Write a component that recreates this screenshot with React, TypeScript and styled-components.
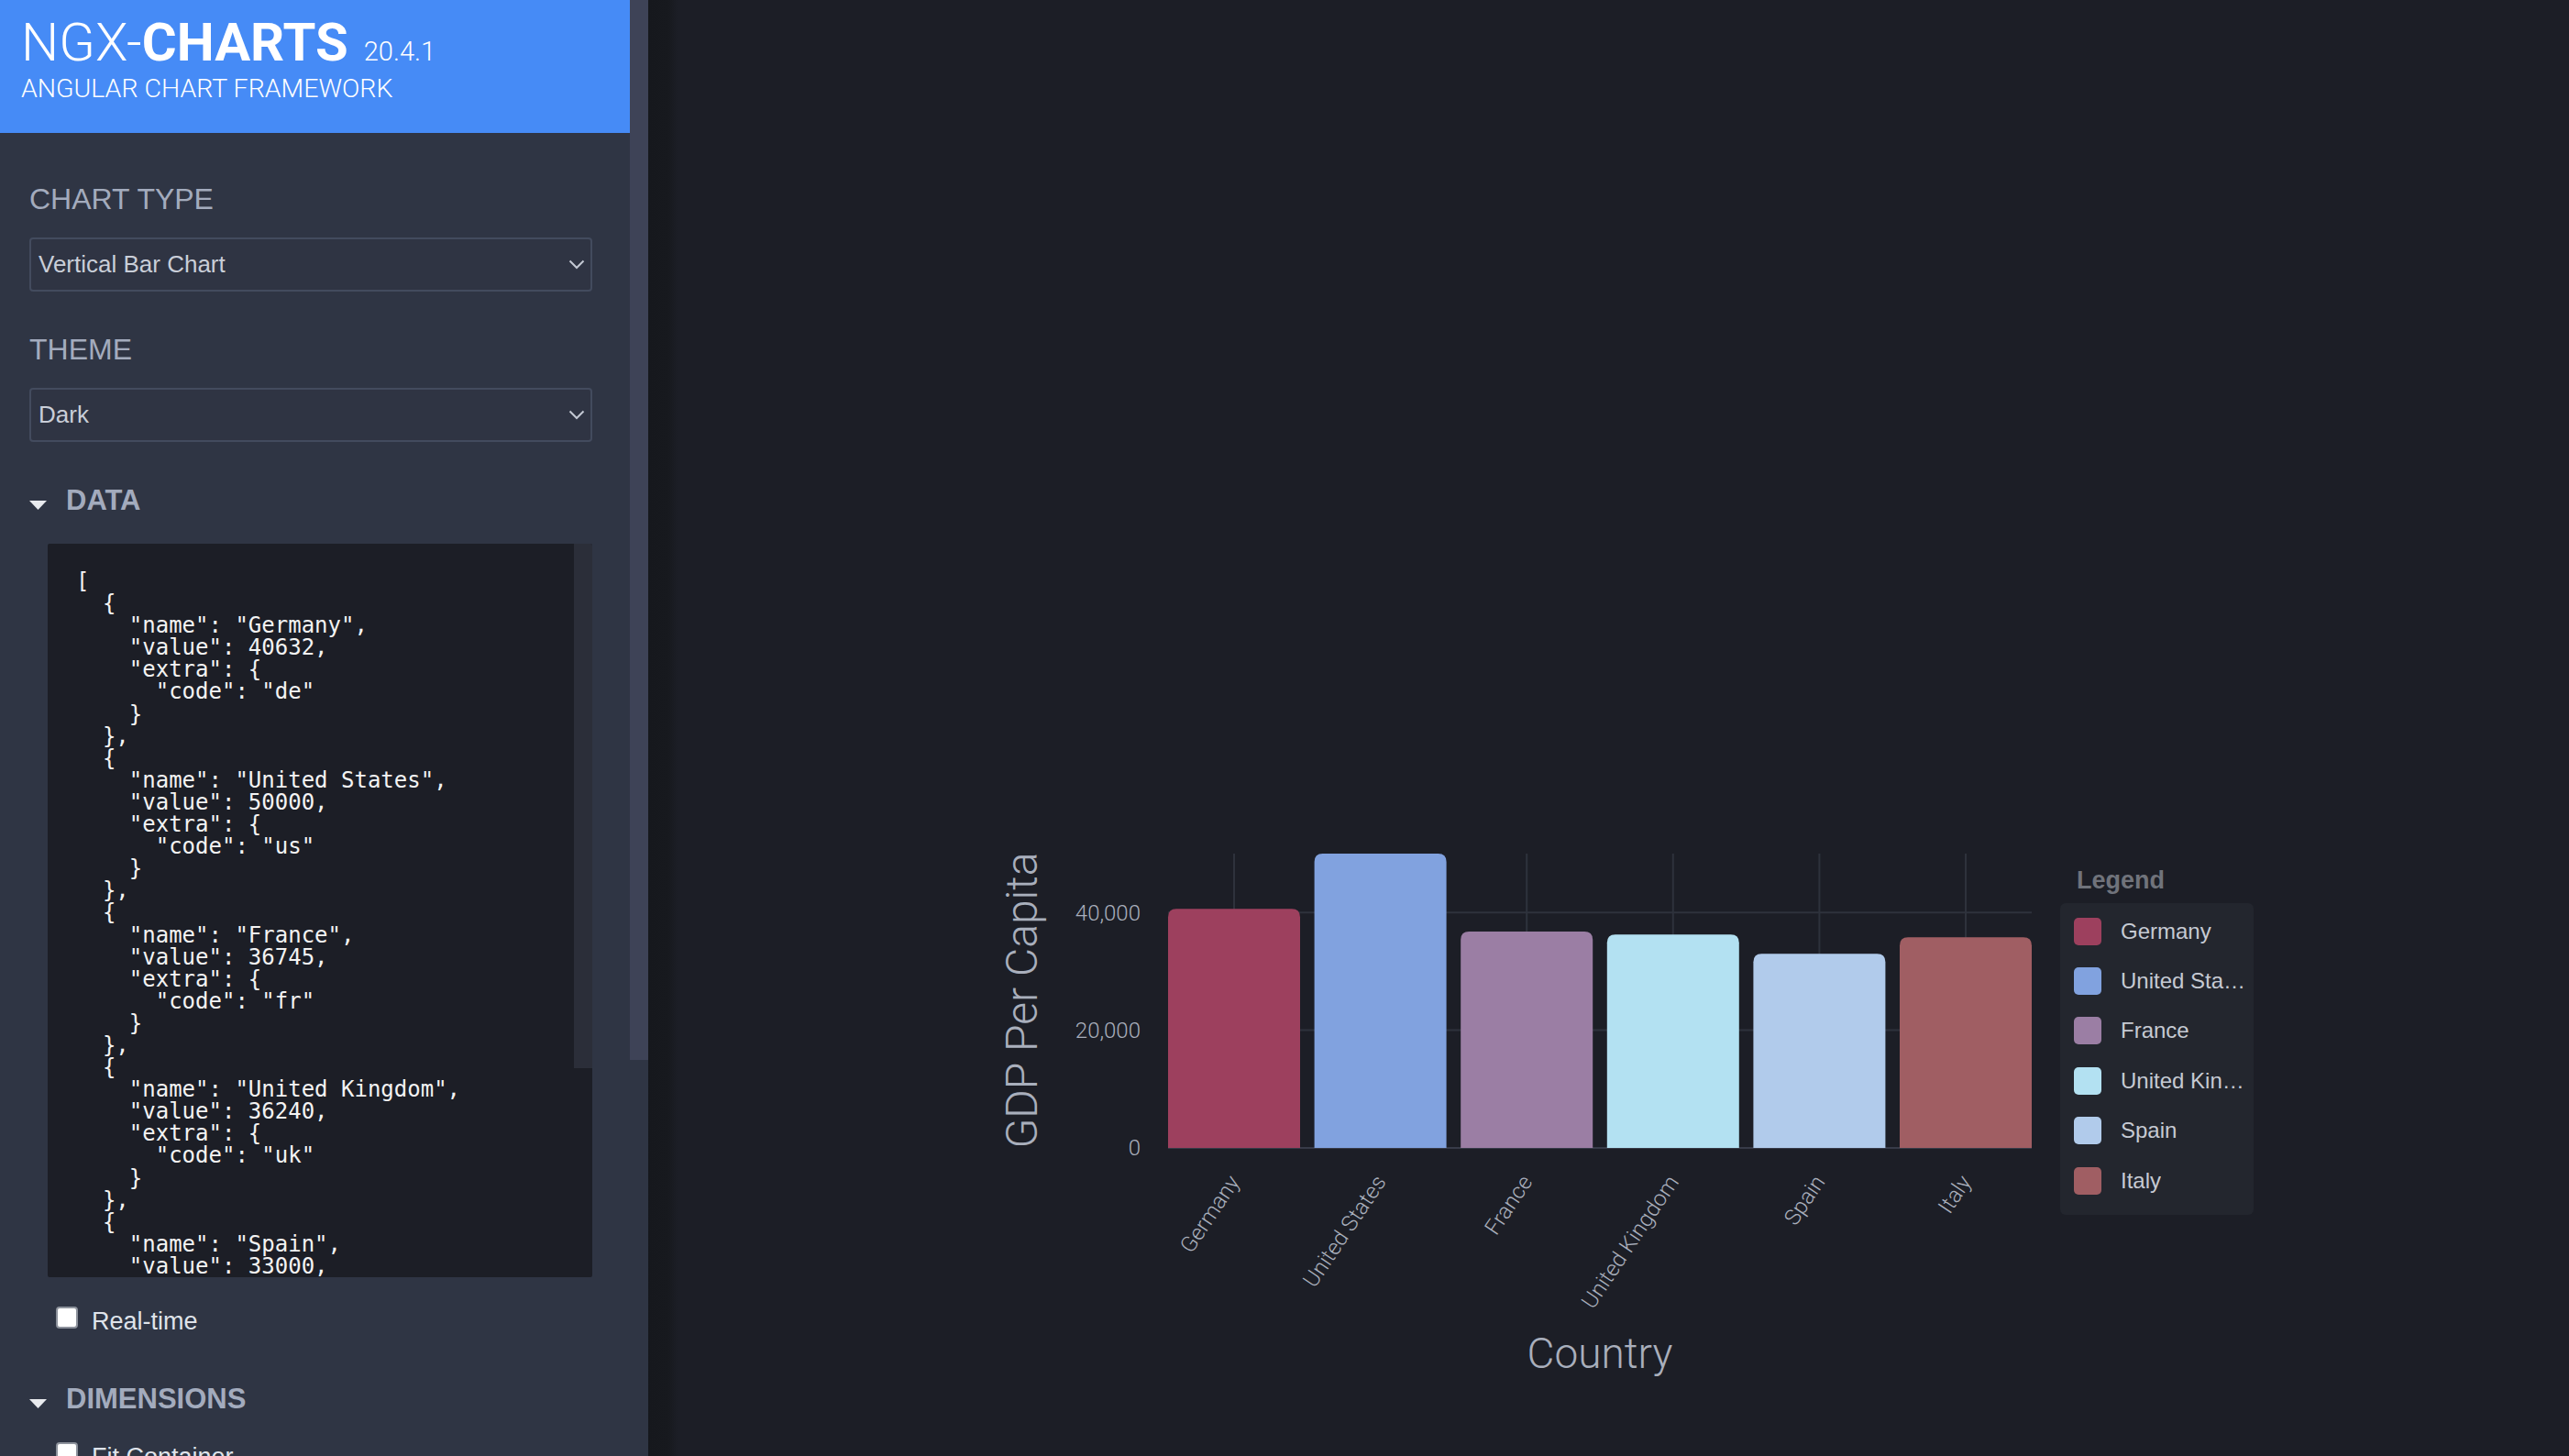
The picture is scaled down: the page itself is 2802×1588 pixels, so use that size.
import React from 'react';
import styled, { createGlobalStyle } from 'styled-components';

const GlobalStyle = createGlobalStyle`
  html, body { margin: 0; padding: 0; height: 100%; overflow: hidden; background: #1c1e26; }
  #root { height: 100%; }
  * { box-sizing: border-box; }
`;

const Page = styled.div`
  display: flex;
  width: 2802px;
  height: 1588px;
  overflow: hidden;
`;

/* ---------- Sidebar ---------- */
const Sidebar = styled.aside`
  display: flex;
  flex-shrink: 0;
  width: 707px;
  height: 100%;
  background: #2f3544;
`;

const SidebarContent = styled.div`
  width: 687px;
  height: 100%;
  overflow: hidden;
  display: flex;
  flex-direction: column;
`;

const PageScrollbar = styled.div`
  width: 20px;
  height: 100%;
  background: #2f3544;
  display: flex;
  flex-direction: column;
`;

const ScrollThumb = styled.div<{ $height: number; $color: string }>`
  flex-shrink: 0;
  height: ${(p) => p.$height}px;
  background: ${(p) => p.$color};
`;

const Header = styled.header`
  flex-shrink: 0;
  height: 145px;
  padding: 18px 0 0 23px;
  background: #468bf6;
  color: #ffffff;
  font-family: Roboto, "Liberation Sans", sans-serif;
`;

const Title = styled.h1`
  margin: 0;
  font-size: 58px;
  line-height: 56px;
  font-weight: 300;
  white-space: nowrap;
`;

const TitleStrong = styled.strong`
  font-weight: 700;
`;

const Version = styled.span`
  margin-left: 17px;
  font-size: 29px;
  font-weight: 300;
`;

const Tagline = styled.div`
  margin-top: -1px;
  font-size: 28.5px;
  line-height: 28px;
  font-weight: 300;
  white-space: nowrap;
`;

const Controls = styled.div`
  display: flex;
  flex-direction: column;
  padding: 56px 41px 0 32px;
  font-family: "Liberation Sans", Arial, sans-serif;
`;

const FieldLabel = styled.div<{ $gap: number }>`
  margin-top: ${(p) => p.$gap}px;
  font-size: 32px;
  line-height: 32px;
  color: #a3abbd;
  text-transform: uppercase;
  white-space: nowrap;
`;

const Select = styled.div`
  margin-top: 26px;
  height: 59px;
  display: flex;
  align-items: center;
  justify-content: space-between;
  padding: 0 6px 0 8px;
  border: 2px solid #434b5e;
  border-radius: 4px;
  background: #2f3443;
  color: #c9ced8;
  font-size: 26px;
`;

const SectionHeader = styled.div<{ $gap: number }>`
  margin-top: ${(p) => p.$gap}px;
  display: flex;
  align-items: baseline;
  gap: 21px;
  font-size: 31px;
  line-height: 31px;
  font-weight: 700;
  color: #a3abbd;
  text-transform: uppercase;
`;

const CodeBox = styled.div`
  margin: 32px 0 0 20px;
  height: 800px;
  flex-shrink: 0;
  display: flex;
  background: #1c1e26;
  border-radius: 2px;
  overflow: hidden;
`;

const CodeText = styled.pre`
  flex: 1;
  margin: 0;
  padding: 29px 0 0 31px;
  font-family: "DejaVu Sans Mono", "Liberation Mono", monospace;
  font-size: 24px;
  line-height: 24.1px;
  color: #f3f3f3;
  overflow: hidden;
  white-space: pre;
`;

const CodeScrollbar = styled.div`
  width: 20px;
  flex-shrink: 0;
  display: flex;
  flex-direction: column;
`;

const CheckRow = styled.label<{ $gap: number }>`
  margin-top: ${(p) => p.$gap}px;
  margin-left: 29px;
  display: flex;
  align-items: flex-start;
  gap: 15px;
  color: #dfe3ea;
  font-size: 27px;
  line-height: 27px;
  white-space: nowrap;
`;

const CheckBox = styled.span`
  width: 24px;
  height: 24px;
  flex-shrink: 0;
  background: #ffffff;
  border: 2px solid #8d929c;
  border-radius: 4px;
`;

const CheckText = styled.span`
  margin-top: 3px;
`;

/* ---------- Main ---------- */
const Main = styled.main`
  flex: 1;
  height: 100%;
  background: linear-gradient(to right, #16181d 0, #17191e 22px, #1c1e26 32px);
  padding: 900px 0 0 373px;
  display: flex;
  align-items: flex-start;
`;

const ChartSvg = styled.svg`
  flex-shrink: 0;
  display: block;
`;

const GridLine = styled.line`
  stroke: #2e323c;
  stroke-width: 2;
`;

const AxisLine = styled.line`
  stroke: #373b48;
  stroke-width: 2;
`;

const TickText = styled.text`
  font-family: Roboto, "Liberation Sans", sans-serif;
  font-weight: 300;
  font-size: 24px;
  fill: #a9afbc;
`;

const AxisTitle = styled.text<{ $size: number }>`
  font-family: Roboto, "Liberation Sans", sans-serif;
  font-weight: 300;
  font-size: ${(p) => p.$size}px;
  fill: #a9afbc;
`;

const Legend = styled.div`
  margin: 47px 0 0 7px;
  display: flex;
  flex-direction: column;
  font-family: "Liberation Sans", Arial, sans-serif;
`;

const LegendTitle = styled.div`
  padding-left: 18px;
  font-size: 27px;
  line-height: 27px;
  font-weight: 700;
  color: #70737b;
`;

const LegendBox = styled.ul`
  margin: 11px 0 0;
  padding: 3.5px 0 10.5px 15px;
  width: 211px;
  list-style: none;
  background: #23262e;
  border-radius: 6px;
`;

const LegendItem = styled.li`
  height: 54.4px;
  display: flex;
  align-items: center;
  gap: 21px;
`;

const Swatch = styled.span<{ $color: string }>`
  width: 30px;
  height: 30px;
  flex-shrink: 0;
  border-radius: 5px;
  background: ${(p) => p.$color};
`;

const LegendLabel = styled.span`
  max-width: 141px;
  overflow: hidden;
  white-space: nowrap;
  text-overflow: ellipsis;
  font-size: 24px;
  line-height: 28px;
  color: #c6cad3;
`;

/* ---------- Data ---------- */
const data = [
  { name: 'Germany', value: 40632, code: 'de', color: '#9d405e' },
  { name: 'United States', value: 50000, code: 'us', color: '#81a2df' },
  { name: 'France', value: 36745, code: 'fr', color: '#9b7ea4' },
  { name: 'United Kingdom', value: 36240, code: 'uk', color: '#b3e1f2' },
  { name: 'Spain', value: 33000, code: 'es', color: '#b1cbeb' },
  { name: 'Italy', value: 35800, code: 'it', color: '#a05e63' },
];

const jsonText = '[\n' + data
  .map(
    (d) =>
      `  {\n    "name": "${d.name}",\n    "value": ${d.value},\n    "extra": {\n      "code": "${d.code}"\n    }\n  }`
  )
  .join(',\n') + '\n]';

const PLOT_LEFT = 1274;
const PLOT_RIGHT = 2216;
const BASE_Y = 1252;
const TOP_Y = 931;
const BAR_W = 144;
const STEP = (PLOT_RIGHT - PLOT_LEFT - BAR_W) / 5;
const yScale = (v: number) => BASE_Y - (v / 50000) * (BASE_Y - TOP_Y);

function barPath(x: number, y: number, w: number, h: number, r: number) {
  return `M${x},${y + h} L${x},${y + r} Q${x},${y} ${x + r},${y} L${x + w - r},${y} Q${x + w},${y} ${x + w},${y + r} L${x + w},${y + h} Z`;
}

const Chevron = () => (
  <svg width="18" height="11" viewBox="0 0 18 11">
    <polyline points="1.5,1.5 9,9 16.5,1.5" fill="none" stroke="#c3c8d3" strokeWidth="2" />
  </svg>
);

const Caret = () => (
  <svg width="19" height="10" viewBox="0 0 19 10">
    <polygon points="0,0 19,0 9.5,10" fill="#e8eaee" />
  </svg>
);

const BarChart = () => {
  const ticks = [0, 20000, 40000];
  return (
    <ChartSvg width={1160} height={620} viewBox="1080 900 1160 620">
      {ticks.slice(1).map((t) => (
        <GridLine key={t} x1={PLOT_LEFT} x2={PLOT_RIGHT} y1={yScale(t)} y2={yScale(t)} />
      ))}
      {data.map((d, i) => {
        const cx = PLOT_LEFT + i * STEP + BAR_W / 2;
        return <GridLine key={d.name} x1={cx} x2={cx} y1={TOP_Y} y2={BASE_Y} />;
      })}
      <AxisLine x1={PLOT_LEFT} x2={PLOT_RIGHT} y1={BASE_Y} y2={BASE_Y} />
      {data.map((d, i) => {
        const x = PLOT_LEFT + i * STEP;
        const y = yScale(d.value);
        return <path key={d.name} d={barPath(x, y, BAR_W, BASE_Y - y, 9)} fill={d.color} />;
      })}
      {ticks.map((t) => (
        <TickText key={t} x={1244} y={yScale(t)} dy="0.35em" textAnchor="end">
          {t.toLocaleString('en-US')}
        </TickText>
      ))}
      {data.map((d, i) => {
        const ax = PLOT_LEFT + i * STEP + BAR_W / 2 + 7;
        const ay = 1289;
        return (
          <TickText key={d.name} x={ax} y={ay} textAnchor="end" transform={`rotate(-56 ${ax} ${ay})`}>
            {d.name}
          </TickText>
        );
      })}
      <AxisTitle $size={48} x={1131} y={1091} textAnchor="middle" transform="rotate(-90 1131 1091)">
        GDP Per Capita
      </AxisTitle>
      <AxisTitle $size={46} x={(PLOT_LEFT + PLOT_RIGHT) / 2} y={1492} textAnchor="middle">
        Country
      </AxisTitle>
    </ChartSvg>
  );
};

export default function App() {
  return (
    <>
      <GlobalStyle />
      <Page>
        <Sidebar>
          <SidebarContent>
            <Header>
              <Title>
                NGX-<TitleStrong>CHARTS</TitleStrong>
                <Version>20.4.1</Version>
              </Title>
              <Tagline>ANGULAR CHART FRAMEWORK</Tagline>
            </Header>
            <Controls>
              <FieldLabel $gap={0}>Chart Type</FieldLabel>
              <Select>
                <span>Vertical Bar Chart</span>
                <Chevron />
              </Select>
              <FieldLabel $gap={47}>Theme</FieldLabel>
              <Select>
                <span>Dark</span>
                <Chevron />
              </Select>
              <SectionHeader $gap={48}>
                <Caret />
                <span>Data</span>
              </SectionHeader>
              <CodeBox>
                <CodeText>{jsonText}</CodeText>
                <CodeScrollbar>
                  <ScrollThumb $height={572} $color="#2b2e39" />
                </CodeScrollbar>
              </CodeBox>
              <CheckRow $gap={32}>
                <CheckBox />
                <CheckText>Real-time</CheckText>
              </CheckRow>
              <SectionHeader $gap={55}>
                <Caret />
                <span>Dimensions</span>
              </SectionHeader>
              <CheckRow $gap={32}>
                <CheckBox />
                <CheckText>Fit Container</CheckText>
              </CheckRow>
            </Controls>
          </SidebarContent>
          <PageScrollbar>
            <ScrollThumb $height={1156} $color="#3e4357" />
          </PageScrollbar>
        </Sidebar>
        <Main>
          <BarChart />
          <Legend>
            <LegendTitle>Legend</LegendTitle>
            <LegendBox>
              {data.map((d) => (
                <LegendItem key={d.name}>
                  <Swatch $color={d.color} />
                  <LegendLabel>{d.name}</LegendLabel>
                </LegendItem>
              ))}
            </LegendBox>
          </Legend>
        </Main>
      </Page>
    </>
  );
}
